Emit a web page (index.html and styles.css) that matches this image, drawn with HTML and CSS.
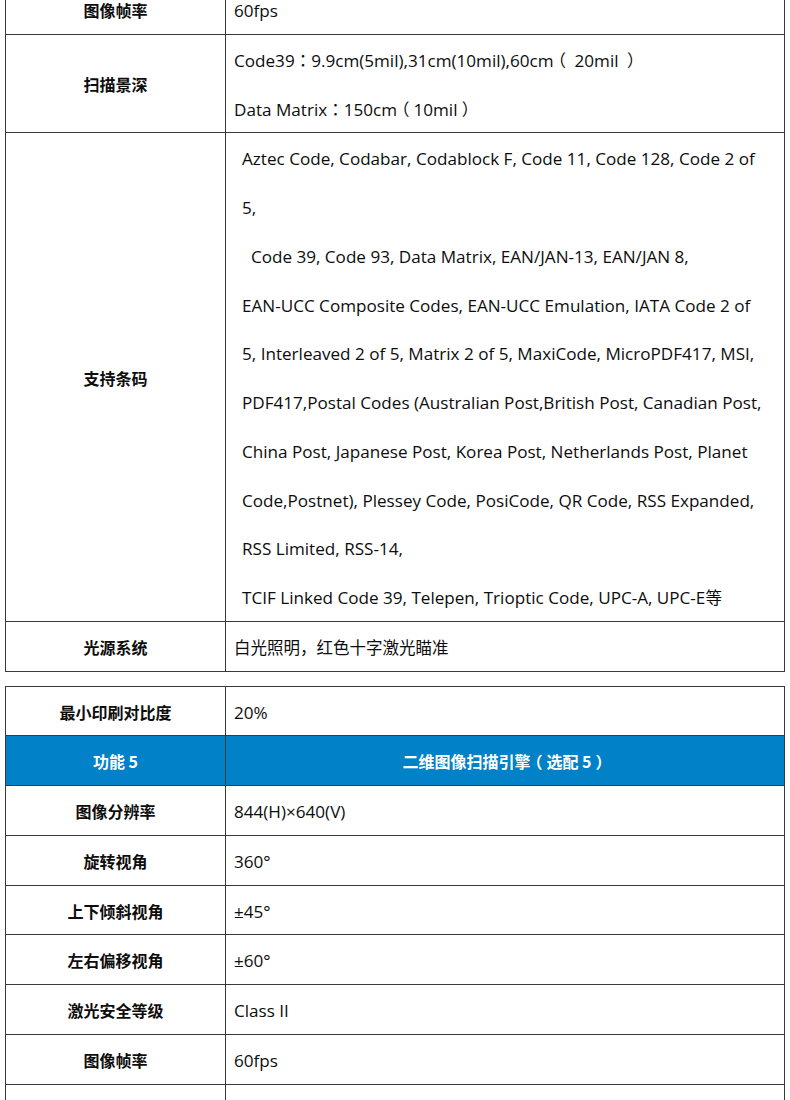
FILE: index.html
```html
<!DOCTYPE html>
<html lang="zh-CN">
<head>
<meta charset="utf-8">
<title>规格参数</title>
<link rel="stylesheet" href="styles.css">
</head>
<body>
<div class="page">
  <table class="spec spec-first">
    <tr><th>图像帧率</th><td>60fps</td></tr>
    <tr><th>扫描景深</th><td>
      <div class="ln">Code39<span class="fw" lang="zh-TW">：</span>9.9cm(5mil),31cm(10mil),60cm<span class="par">（</span> 20mil <span class="par">）</span></div>
      <div class="ln">Data Matrix<span class="fw" lang="zh-TW">：</span>150cm<span class="par">（</span>10mil<span class="par">）</span></div>
    </td></tr>
    <tr><th>支持条码</th><td class="codes">
      <div class="ln">Aztec Code, Codabar, Codablock F, Code 11, Code 128, Code 2 of</div>
      <div class="ln">5,</div>
      <div class="ln">&nbsp;&nbsp;Code 39, Code 93, Data Matrix, EAN/JAN-13, EAN/JAN 8,</div>
      <div class="ln">EAN-UCC Composite Codes, EAN-UCC Emulation, IATA Code 2 of</div>
      <div class="ln">5, Interleaved 2 of 5, Matrix 2 of 5, MaxiCode, MicroPDF417, MSI,</div>
      <div class="ln">PDF417,Postal Codes (Australian Post,British Post, Canadian Post,</div>
      <div class="ln">China Post, Japanese Post, Korea Post, Netherlands Post, Planet</div>
      <div class="ln">Code,Postnet), Plessey Code, PosiCode, QR Code, RSS Expanded,</div>
      <div class="ln">RSS Limited, RSS-14,</div>
      <div class="ln">TCIF Linked Code 39, Telepen, Trioptic Code, UPC-A, UPC-E<span class="cjk">等</span></div>
    </td></tr>
    <tr><th>光源系统</th><td class="cjk">白光照明，红色十字激光瞄准</td></tr>
  </table>
  <table class="spec spec-second">
    <tr><th>最小印刷对比度</th><td>20%</td></tr>
    <tr class="head"><th>功能 5</th><td>二维图像扫描引擎<span class="par">（</span>选配 5<span class="par">）</span></td></tr>
    <tr><th>图像分辨率</th><td>844(H)×640(V)</td></tr>
    <tr><th>旋转视角</th><td>360°</td></tr>
    <tr><th>上下倾斜视角</th><td>±45°</td></tr>
    <tr><th>左右偏移视角</th><td>±60°</td></tr>
    <tr><th>激光安全等级</th><td>Class II</td></tr>
    <tr><th>图像帧率</th><td>60fps</td></tr>
    <tr><th>&nbsp;</th><td>&nbsp;</td></tr>
  </table>
</div>
</body>
</html>
```
FILE: styles.css
```css
html, body {
  margin: 0;
  padding: 0;
  background: #ffffff;
}
body {
  font-family: "Open Sans", "Noto Sans CJK SC", sans-serif;
  font-size: 16px;
  color: #0d0d0d;
}
.page {
  padding-left: 5px;
  width: 780px;
}
.spec {
  width: 780px;
  border-collapse: collapse;
  table-layout: fixed;
}
.spec-first {
  margin-top: -16px;
}
.spec-second {
  margin-top: 14px;
}
.spec th,
.spec td {
  border: 1px solid #3a3a3a;
  line-height: 45.75px;
  padding: 3px 0 0 0;
  vertical-align: middle;
}
.spec th {
  width: 219px;
  text-align: center;
  font-family: "Noto Sans CJK SC", sans-serif;
  font-size: 16px;
  font-weight: 700;
}
.spec td {
  text-align: left;
  padding-left: 8px;
  white-space: nowrap;
  font-size: 17.1px;
}
.spec td .ln + .ln {
  padding-top: 3px;
}
.spec td.codes {
  padding-left: 16px;
}
.spec .cjk {
  font-family: "Noto Sans CJK SC", sans-serif;
  font-size: 16.5px;
}
.spec .fw {
  font-family: "Noto Sans CJK TC", "Noto Sans CJK JP", sans-serif;
  font-size: 16.5px;
}
.spec .par {
  font-family: "Noto Sans CJK SC", sans-serif;
  font-size: 16.5px;
  font-feature-settings: "halt" 1;
  padding: 0 0.25em;
}
.spec tr.head th,
.spec tr.head td {
  background: #0181c8;
  color: #ffffff;
  font-family: "Noto Sans CJK SC", sans-serif;
  font-size: 16px;
  font-weight: 700;
  text-align: center;
  padding-left: 0;
}
.spec tr.head .par {
  font-size: 16px;
}
```
